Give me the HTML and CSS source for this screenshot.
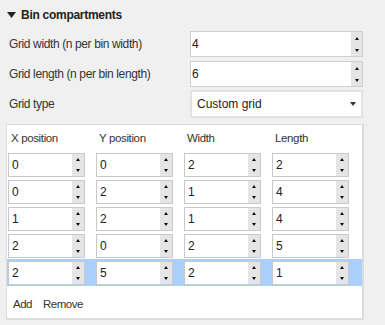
FILE: index.html
```html
<!DOCTYPE html>
<html>
<head>
<meta charset="utf-8">
<link rel="stylesheet" href="styles.css">
</head>
<body>
<div class="page">
  <div class="section-head">
    <svg class="caret" width="9" height="6" viewBox="0 0 9 6"><path d="M0 0H9L4.5 6Z" fill="#222"/></svg>
    <span class="section-title">Bin compartments</span>
  </div>

  <div class="form">
    <div class="form-row r1">
      <span class="label">Grid width (n per bin width)</span>
      <div class="spin big">
        <span class="val">4</span>
        <span class="btns"><i class="up"></i><i class="down"></i></span>
      </div>
    </div>
    <div class="form-row r2">
      <span class="label">Grid length (n per bin length)</span>
      <div class="spin big">
        <span class="val">6</span>
        <span class="btns"><i class="up"></i><i class="down"></i></span>
      </div>
    </div>
    <div class="form-row r3">
      <span class="label">Grid type</span>
      <div class="combo">
        <span class="combo-text">Custom grid</span>
        <i class="down"></i>
      </div>
    </div>
  </div>

  <div class="panel">
    <div class="grid thead">
      <span>X position</span><span>Y position</span><span>Width</span><span>Length</span>
    </div>
    <div class="grid row">
      <div class="spin"><span class="val">0</span><span class="btns"><i class="up"></i><i class="down"></i></span></div>
      <div class="spin"><span class="val">0</span><span class="btns"><i class="up"></i><i class="down"></i></span></div>
      <div class="spin"><span class="val">2</span><span class="btns"><i class="up"></i><i class="down"></i></span></div>
      <div class="spin"><span class="val">2</span><span class="btns"><i class="up"></i><i class="down"></i></span></div>
    </div>
    <div class="grid row">
      <div class="spin"><span class="val">0</span><span class="btns"><i class="up"></i><i class="down"></i></span></div>
      <div class="spin"><span class="val">2</span><span class="btns"><i class="up"></i><i class="down"></i></span></div>
      <div class="spin"><span class="val">1</span><span class="btns"><i class="up"></i><i class="down"></i></span></div>
      <div class="spin"><span class="val">4</span><span class="btns"><i class="up"></i><i class="down"></i></span></div>
    </div>
    <div class="grid row">
      <div class="spin"><span class="val">1</span><span class="btns"><i class="up"></i><i class="down"></i></span></div>
      <div class="spin"><span class="val">2</span><span class="btns"><i class="up"></i><i class="down"></i></span></div>
      <div class="spin"><span class="val">1</span><span class="btns"><i class="up"></i><i class="down"></i></span></div>
      <div class="spin"><span class="val">4</span><span class="btns"><i class="up"></i><i class="down"></i></span></div>
    </div>
    <div class="grid row">
      <div class="spin"><span class="val">2</span><span class="btns"><i class="up"></i><i class="down"></i></span></div>
      <div class="spin"><span class="val">0</span><span class="btns"><i class="up"></i><i class="down"></i></span></div>
      <div class="spin"><span class="val">2</span><span class="btns"><i class="up"></i><i class="down"></i></span></div>
      <div class="spin"><span class="val">5</span><span class="btns"><i class="up"></i><i class="down"></i></span></div>
    </div>
    <div class="grid row selected">
      <div class="spin"><span class="val">2</span><span class="btns"><i class="up"></i><i class="down"></i></span></div>
      <div class="spin"><span class="val">5</span><span class="btns"><i class="up"></i><i class="down"></i></span></div>
      <div class="spin"><span class="val">2</span><span class="btns"><i class="up"></i><i class="down"></i></span></div>
      <div class="spin"><span class="val">1</span><span class="btns"><i class="up"></i><i class="down"></i></span></div>
    </div>
    <div class="actions">
      <span>Add</span><span>Remove</span>
    </div>
  </div>
</div>
</body>
</html>
```

FILE: styles.css
```css
html, body {
  margin: 0;
  padding: 0;
  background: #f0f0f0;
}
body {
  font-family: "Liberation Sans", Arial, sans-serif;
  font-size: 12px;
  color: #333;
  width: 385px;
  height: 325px;
  overflow: hidden;
}
.page {
  display: flex;
  flex-direction: column;
}
.section-head {
  height: 29px;
  display: flex;
  align-items: center;
  padding-left: 7px;
  gap: 5px;
}
.section-title {
  font-weight: bold;
  font-size: 12px;
  letter-spacing: -0.28px;
  color: #222;
}
.caret { display: block; }

.form {
  display: flex;
  flex-direction: column;
  padding-top: 2px;
}
.form-row {
  display: flex;
  align-items: center;
  padding-left: 9px;
}
.form-row .label {
  width: 181px;
  font-size: 12px;
  letter-spacing: -0.38px;
}
.r2 { margin-top: 4px; }
.r3 { margin-top: 3px; }

.spin {
  box-sizing: border-box;
  height: 24px;
  border: 1px solid #c8c8c8;
  background: #fff;
  display: flex;
  align-items: stretch;
}
.spin.big {
  width: 173px;
  height: 26px;
  border-color: #cfcfcf;
}
.spin .val {
  flex: 1;
  display: flex;
  align-items: center;
  padding-left: 3px;
  color: #222;
}
.spin.big .val { padding-left: 1px; }
.btns {
  width: 12px;
  background: #e5e5e5;
  display: flex;
  flex-direction: column;
}
.spin.big .btns { width: 11px; }
.btns i {
  flex: 1;
  display: flex;
  align-items: center;
  justify-content: center;
}
.up::before, .down::before {
  content: "";
  display: block;
  width: 0;
  height: 0;
  border-left: 2.5px solid transparent;
  border-right: 2.5px solid transparent;
}
.up::before { border-bottom: 3px solid #111; }
.down::before { border-top: 3px solid #111; }

.combo {
  box-sizing: border-box;
  width: 173px;
  height: 28px;
  border: 2px solid #e2e2e2;
  background: #fff;
  display: flex;
  align-items: center;
  padding-left: 5px;
  padding-right: 5px;
}
.combo-text { flex: 1; color: #222; }
.combo .down::before {
  border-left-width: 3px;
  border-right-width: 3px;
  border-top-width: 4px;
  border-top-color: #333;
}

.panel {
  box-sizing: border-box;
  margin: 6px 21px 0 6px;
  height: 196px;
  border: 1px solid #dcdcdc;
  border-right-width: 2px;
  border-bottom-width: 2px;
  background: #fff;
  display: flex;
  flex-direction: column;
}
.grid {
  display: grid;
  grid-template-columns: repeat(4, 77px);
  column-gap: 11px;
  padding-left: 1px;
  flex: none;
}
.thead {
  height: 26px;
  align-items: center;
  padding-left: 4px;
  font-size: 11.5px;
  letter-spacing: -0.36px;
}
.thead span { color: #333; }
.row {
  height: 27px;
  box-sizing: border-box;
  padding-top: 2px;
}
.row.selected { background: #abcffd; }
.actions {
  flex: 1;
  display: flex;
  gap: 11px;
  padding-left: 6px;
  padding-top: 11px;
  align-items: flex-start;
  font-size: 11.5px;
  letter-spacing: -0.5px;
  line-height: 14px;
}
```
